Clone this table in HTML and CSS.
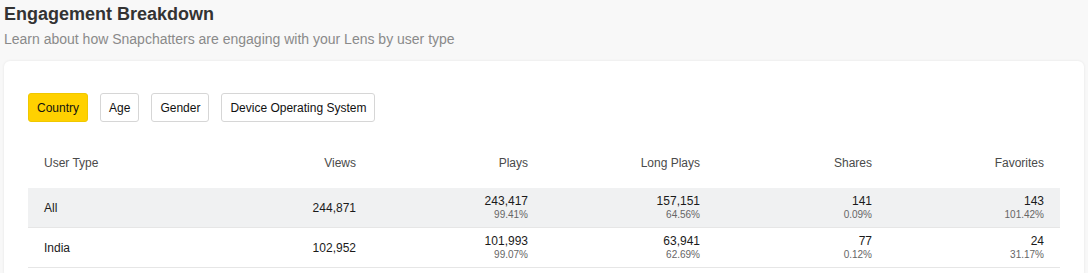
FILE: index.html
```html
<!DOCTYPE html>
<html lang="en">
<head>
<meta charset="utf-8">
<title>Engagement Breakdown</title>
<link rel="stylesheet" href="styles.css">
</head>
<body>
<header class="intro">
  <h1 class="title">Engagement Breakdown</h1>
  <p class="subtitle">Learn about how Snapchatters are engaging with your Lens by user type</p>
</header>
<section class="card">
  <div class="tabs">
    <button class="tab active">Country</button>
    <button class="tab">Age</button>
    <button class="tab">Gender</button>
    <button class="tab">Device Operating System</button>
  </div>
  <table class="grid">
    <thead>
      <tr>
        <th class="left">User Type</th>
        <th>Views</th>
        <th>Plays</th>
        <th>Long Plays</th>
        <th>Shares</th>
        <th>Favorites</th>
      </tr>
    </thead>
    <tbody>
      <tr class="total">
        <td class="left">All</td>
        <td>244,871</td>
        <td><div class="num">243,417</div><div class="pct">99.41%</div></td>
        <td><div class="num">157,151</div><div class="pct">64.56%</div></td>
        <td><div class="num">141</div><div class="pct">0.09%</div></td>
        <td><div class="num">143</div><div class="pct">101.42%</div></td>
      </tr>
      <tr>
        <td class="left">India</td>
        <td>102,952</td>
        <td><div class="num">101,993</div><div class="pct">99.07%</div></td>
        <td><div class="num">63,941</div><div class="pct">62.69%</div></td>
        <td><div class="num">77</div><div class="pct">0.12%</div></td>
        <td><div class="num">24</div><div class="pct">31.17%</div></td>
      </tr>
    </tbody>
  </table>
</section>
</body>
</html>
```

FILE: styles.css
```css
html, body {
  margin: 0;
  padding: 0;
  background: #f8f8f8;
  font-family: "Liberation Sans", Arial, sans-serif;
  color: #222;
}

.intro {
  padding: 3px 4px 0;
}

.title {
  margin: 0;
  font-size: 18px;
  line-height: 22px;
  font-weight: bold;
  color: #333;
}

.subtitle {
  margin: 5px 0 0;
  font-size: 14px;
  line-height: 18px;
  color: #8a8a8a;
}

.card {
  margin: 13px 4px 0;
  background: #fff;
  border-radius: 6px;
  box-shadow: 0 0 3px rgba(0, 0, 0, 0.08);
  padding: 32px 24px 10px;
}

.tabs {
  display: flex;
  gap: 12px;
}

.tab {
  height: 29px;
  padding: 0 8px;
  font-family: "Liberation Sans", Arial, sans-serif;
  font-size: 12px;
  color: #111;
  background: #fff;
  border: 1px solid #d6d6d6;
  border-radius: 3px;
}

.tab.active {
  background: #ffd100;
  border-color: #f0c800;
}

.grid {
  width: 100%;
  margin-top: 16px;
  border-collapse: collapse;
  table-layout: fixed;
  font-size: 12px;
}

.grid th {
  height: 50px;
  padding: 0 16px;
  font-weight: normal;
  color: #4a4a4a;
  text-align: right;
  vertical-align: middle;
}

.grid td {
  height: 39px;
  padding: 0 16px;
  text-align: right;
  vertical-align: middle;
  border-bottom: 1px solid #e6e6e6;
  color: #1a1a1a;
}

.grid .left {
  text-align: left;
}

.grid tr.total td {
  background: #f0f1f2;
}

.num {
  line-height: 14px;
}

.pct {
  font-size: 10px;
  line-height: 13px;
  color: #666;
}
```
